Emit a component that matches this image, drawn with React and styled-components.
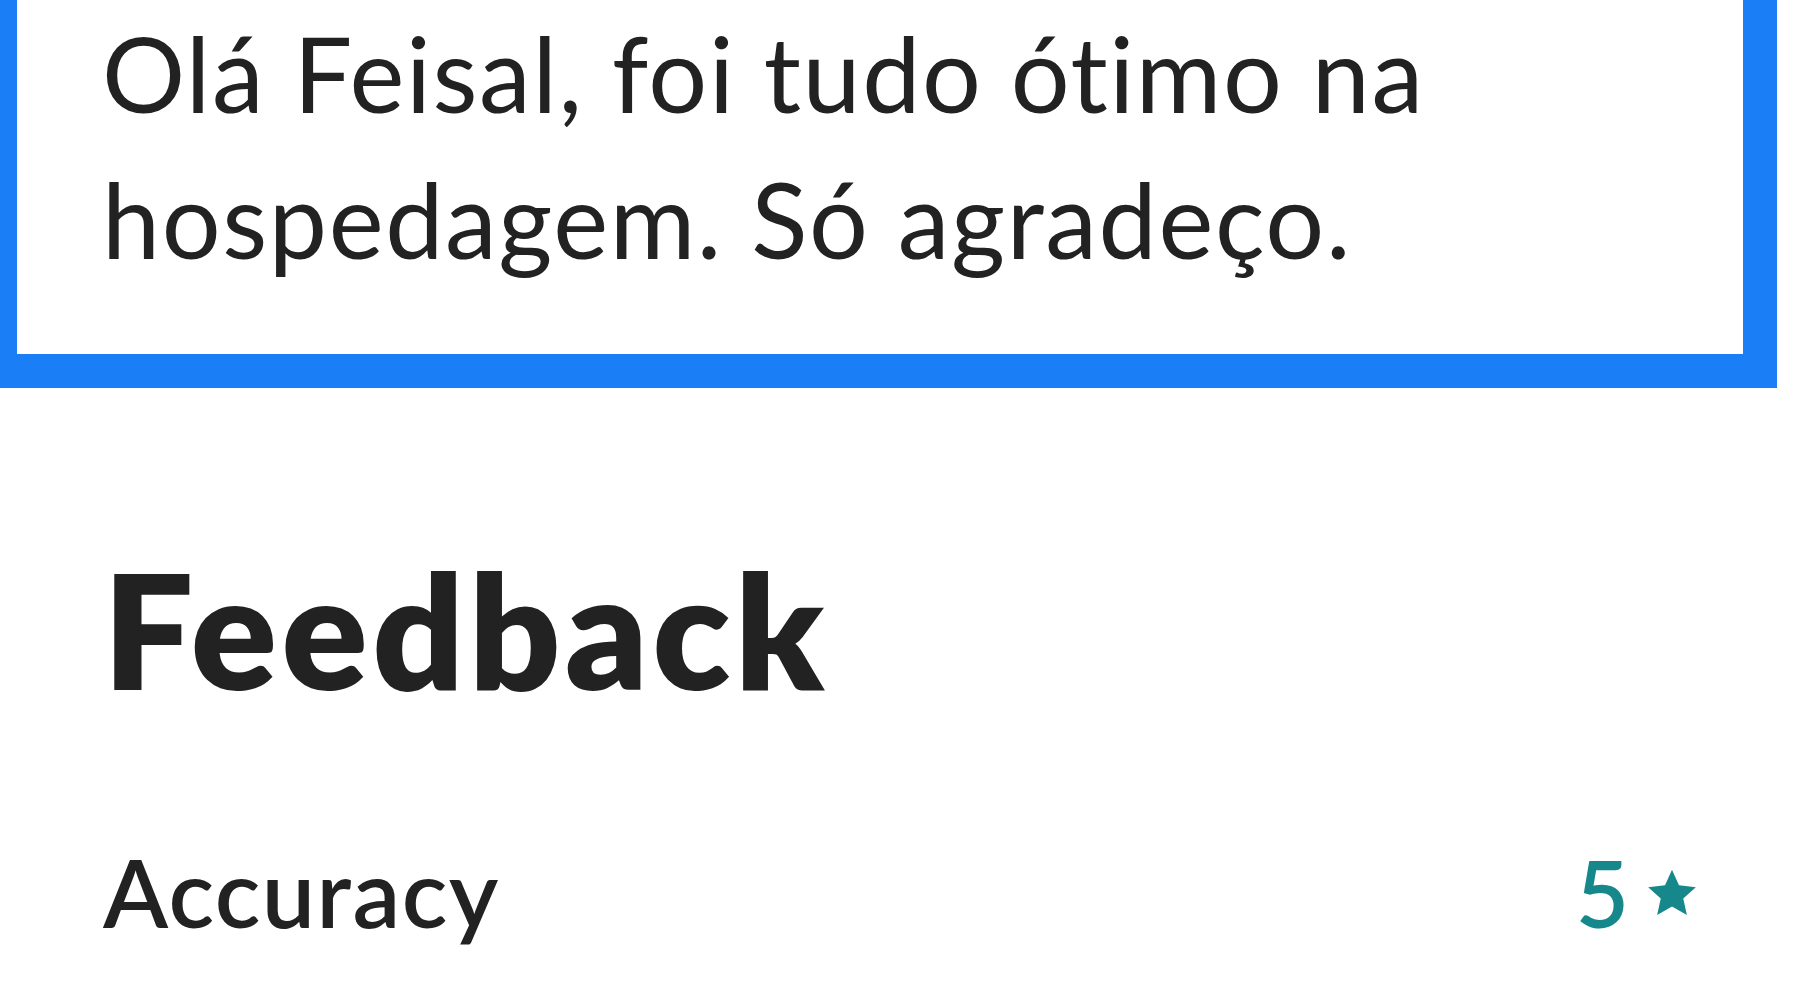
import styled, { createGlobalStyle } from "styled-components";

const Global = createGlobalStyle`
  html, body {
    margin: 0;
    padding: 0;
    background: #ffffff;
  }
  body {
    font-family: Lato, "Noto Sans", sans-serif;
    color: #222222;
    font-variant-ligatures: none;
  }
`;

const Page = styled.div`
  width: 1800px;
  height: 1000px;
  overflow: hidden;
  display: flex;
  flex-direction: column;
`;

const MessageBox = styled.div`
  box-sizing: border-box;
  width: 1777px;
  height: 388px;
  border: 0 solid #1a7ef6;
  border-left-width: 17px;
  border-right-width: 34px;
  border-bottom-width: 34px;
  padding: 0 0 0 85px;
`;

const Message = styled.p`
  margin: 0;
  font-size: 104px;
  line-height: 146px;
  font-weight: 400;
  letter-spacing: 1.6px;
  color: #222222;
  max-width: 1420px;
`;

const Section = styled.section`
  padding: 0 101px 0 103px;
  display: flex;
  flex-direction: column;
`;

const Title = styled.h2`
  margin: 0;
  padding-top: 160px;
  font-size: 160px;
  line-height: 1;
  font-weight: 800;
  letter-spacing: 4.5px;
  color: #222222;
`;

const Row = styled.div`
  display: flex;
  justify-content: space-between;
  align-items: baseline;
  padding-top: 126px;
`;

const Label = styled.span`
  font-size: 95px;
  font-weight: 600;
  letter-spacing: 1.5px;
  color: #222222;
`;

const Score = styled.span`
  display: flex;
  align-items: center;
  gap: 16px;
  font-size: 92px;
  font-weight: 600;
  color: #16888c;
`;

const Star = () => (
  <svg width="54" height="52" viewBox="0 0 24 23" fill="#16888c">
    <path d="M12 1.2l3.1 6.9 7.5.8-5.6 5 1.6 7.4L12 17.5l-6.6 3.8L7 13.9l-5.6-5 7.5-.8z" />
  </svg>
);

export default function App() {
  return (
    <Page>
      <Global />
      <MessageBox>
        <Message>Olá Feisal, foi tudo ótimo na hospedagem. Só agradeço.</Message>
      </MessageBox>
      <Section>
        <Title>Feedback</Title>
        <Row>
          <Label>Accuracy</Label>
          <Score>
            5 <Star />
          </Score>
        </Row>
      </Section>
    </Page>
  );
}
